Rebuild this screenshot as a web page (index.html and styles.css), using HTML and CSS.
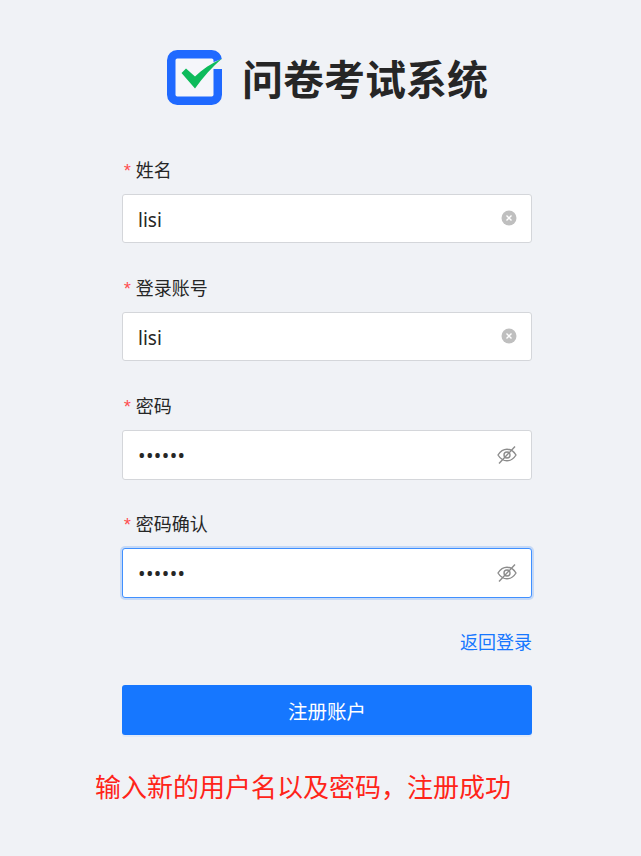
FILE: index.html
```html
<!DOCTYPE html>
<html lang="zh-CN">
<head>
  <meta charset="UTF-8">
  <meta name="viewport" content="width=device-width, initial-scale=1">
  <title>问卷考试系统</title>
  <link rel="stylesheet" href="styles.css">
</head>
<body>
  <main class="page">
    <header class="brand">
      <svg class="brand-logo" width="55" height="55" viewBox="0 0 55 55">
        <rect x="4.25" y="4.25" width="46.5" height="46.5" rx="6" fill="#f5f6fa" stroke="#1f69ff" stroke-width="8.5"/>
        <path d="M44 13 L55 9 L55 19 L46 19 Z" fill="#f0f2f6"/>
        <path d="M14.5 23 L19 18.5 L28 26.5 C35 19.5 44 13.5 55 8.5 C45 17 36 27 28 38.5 Z" fill="#0dbb5b"/>
      </svg>
      <h1 class="brand-name">问卷考试系统</h1>
    </header>

    <form class="form">
      <div class="field field-text">
        <label class="field-label">姓名</label>
        <div class="input-box">
          <input class="input" type="text" value="lisi">
          <svg class="clear-icon" width="16" height="16" viewBox="0 0 16 16">
            <circle cx="8" cy="8" r="7.5" fill="#bfbfbf"/>
            <path d="M5.5 5.5 L10.5 10.5 M10.5 5.5 L5.5 10.5" stroke="#fff" stroke-width="1.4"/>
          </svg>
        </div>
      </div>
      <div class="field field-text">
        <label class="field-label">登录账号</label>
        <div class="input-box">
          <input class="input" type="text" value="lisi">
          <svg class="clear-icon" width="16" height="16" viewBox="0 0 16 16">
            <circle cx="8" cy="8" r="7.5" fill="#bfbfbf"/>
            <path d="M5.5 5.5 L10.5 10.5 M10.5 5.5 L5.5 10.5" stroke="#fff" stroke-width="1.4"/>
          </svg>
        </div>
      </div>
      <div class="field">
        <label class="field-label">密码</label>
        <div class="input-box">
          <input class="input password" type="password" value="123456">
          <svg class="eye-icon" width="20" height="20" viewBox="0 0 20 20" fill="none" stroke="#8c8c8c" stroke-width="1.4">
            <path d="M1 10 C3.5 6 6.5 4.2 10 4.2 C13.5 4.2 16.5 6 19 10 C16.5 14 13.5 15.8 10 15.8 C6.5 15.8 3.5 14 1 10Z"/>
            <circle cx="10" cy="10" r="3"/>
            <path d="M2 18.5 L18 1.5"/>
          </svg>
        </div>
      </div>
      <div class="field">
        <label class="field-label">密码确认</label>
        <div class="input-box focused">
          <input class="input password" type="password" value="123456">
          <svg class="eye-icon" width="20" height="20" viewBox="0 0 20 20" fill="none" stroke="#8c8c8c" stroke-width="1.4">
            <path d="M1 10 C3.5 6 6.5 4.2 10 4.2 C13.5 4.2 16.5 6 19 10 C16.5 14 13.5 15.8 10 15.8 C6.5 15.8 3.5 14 1 10Z"/>
            <circle cx="10" cy="10" r="3"/>
            <path d="M2 18.5 L18 1.5"/>
          </svg>
        </div>
      </div>
      <div class="back-row"><a class="back-link" href="#">返回登录</a></div>
      <button class="submit" type="button">注册账户</button>
    </form>

    <p class="note">输入新的用户名以及密码，注册成功</p>
  </main>
</body>
</html>
```

FILE: styles.css
```css
* { box-sizing: border-box; }
body {
  margin: 0;
  background: #f0f2f6;
  color: #262626;
  font-family: "Noto Sans CJK SC", "Noto Sans", sans-serif;
  font-size: 16px;
}
.page {
  height: 856px;
  overflow: hidden;
  padding-top: 50px;
}
.brand {
  display: flex;
  align-items: center;
  gap: 20px;
  height: 55px;
  padding-left: 167px;
}
.brand-name {
  margin: 0;
  font-size: 41px;
  line-height: 55px;
  font-weight: 700;
  color: #262626;
  white-space: nowrap;
}
.form {
  width: 410px;
  margin: 53px 0 0 122px;
}
.field {
  margin-bottom: 32px;
}
.field-text {
  margin-bottom: 33px;
}
.field-text .input-box {
  height: 49px;
}
.field-label {
  display: block;
  height: 36px;
  line-height: 22px;
  font-size: 18px;
  color: #262626;
}
.field-label::before {
  content: "*";
  color: #ff4d4f;
  font-family: "Liberation Mono", monospace;
  font-size: 18px;
  margin-right: 3px;
}
.input-box {
  display: flex;
  align-items: center;
  height: 50px;
  padding: 0 14px 0 15px;
  background: #fff;
  border: 1px solid #d4d6da;
  border-radius: 3px;
}
.input-box.focused {
  border-color: #4090ff;
  box-shadow: 0 0 0 2px rgba(24, 119, 255, 0.2);
}
.input {
  flex: 1;
  min-width: 0;
  border: none;
  outline: none;
  padding: 0;
  background: transparent;
  font-family: "Noto Sans", sans-serif;
  font-size: 19px;
  color: #262626;
}
.field-text .input {
  padding-top: 2px;
}
.input.password {
  font-size: 20px;
  letter-spacing: 0.4px;
}
.clear-icon {
  margin: -2px 0 0 1px;
}
.back-row {
  display: flex;
  justify-content: flex-end;
  height: 22px;
  margin-top: 19px;
}
.back-link {
  font-size: 18px;
  line-height: 22px;
  color: #1677ff;
  text-decoration: none;
}
.submit {
  display: block;
  width: 100%;
  height: 50px;
  margin-top: 33px;
  border: none;
  border-radius: 3px;
  background: #1677ff;
  color: #fff;
  font-family: inherit;
  font-size: 19.5px;
  box-shadow: 0 2px 0 rgba(5, 95, 255, 0.06);
}
.note {
  margin: 33px 0 0 95px;
  font-size: 26px;
  line-height: 36px;
  color: #ff2419;
  white-space: nowrap;
}
```
